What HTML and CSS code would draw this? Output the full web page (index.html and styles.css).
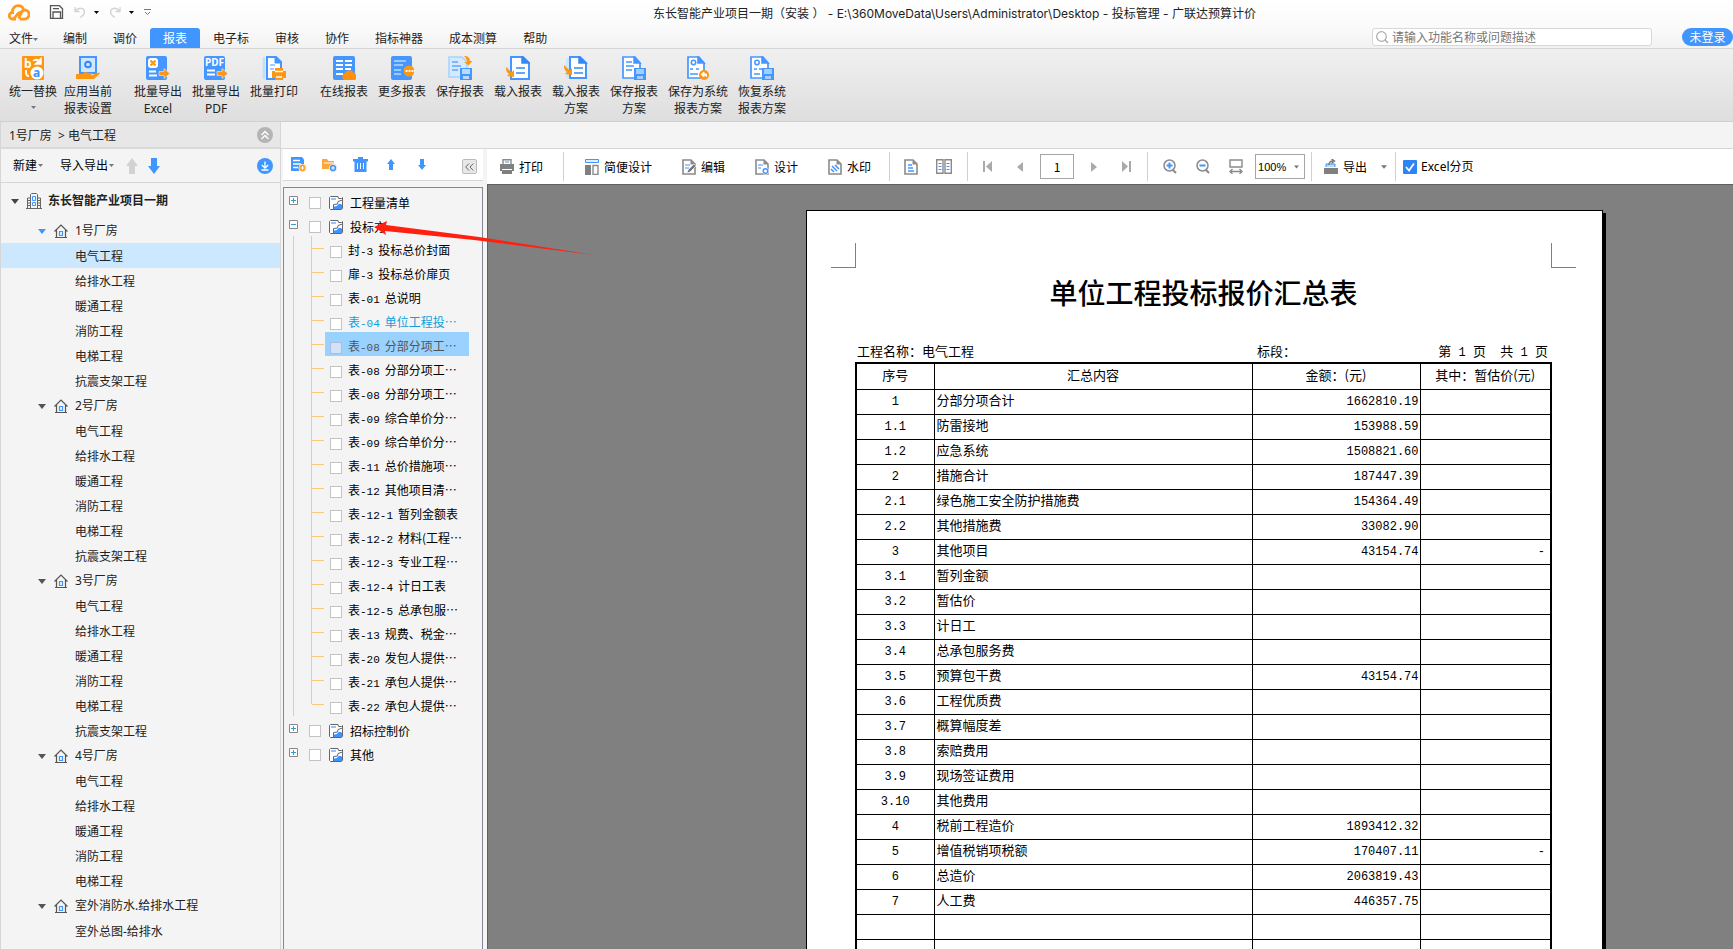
FILE: index.html
```html
<!DOCTYPE html>
<html lang="zh-CN">
<head>
<meta charset="utf-8">
<title>投标管理 - 广联达预算计价</title>
<link rel="stylesheet" href="styles.css">
</head>
<body>
<svg class="defs" aria-hidden="true">
  <symbol id="caret" viewBox="0 0 5 3"><path d="M0 0h5L2.500 3z" fill="currentColor"/></symbol>
  <symbol id="tri" viewBox="0 0 8 5"><path d="M0 0h8L4 5z" fill="currentColor"/></symbol>
  <symbol id="house" viewBox="0 0 14 14"><path d="M.5 7.500 7 1l6.500 6.500M2.500 6v7.500M11.500 6v7.500M1 13.500h12" fill="none" stroke="#555" stroke-width="1.200"/><path d="M5.500 7.500h3v4h-3z" fill="none" stroke="#4095ff" stroke-width="1.200"/></symbol>
  <symbol id="city" viewBox="0 0 16 16"><path d="M4.500 15V1.500l1-1h5l1 1V15M4.500 5h-3v10M11.500 5h3v10M0 15.500h16M2 7.500h2M2 10h2M2 12.500h2M12 7.500h2M12 10h2M12 12.500h2" fill="none" stroke="#666"/><path d="M6.500 3.500h3v4h-3zM6.500 9.500h3v3h-3z" fill="none" stroke="#4095ff"/></symbol>
  <symbol id="up" viewBox="0 0 12 16"><path d="M6 0l6 8H9v8H3V8H0z" fill="currentColor"/></symbol>
  <symbol id="down" viewBox="0 0 12 16"><path d="M6 16l6-8H9V0H3v8H0z" fill="currentColor"/></symbol>
  <symbol id="plus" viewBox="0 0 9 9"><path d="M.5.5h8v8h-8z" fill="#fff" stroke="#888"/><path d="M2 4.500h5M4.500 2v5" stroke="#2ba3dc"/></symbol>
  <symbol id="minus" viewBox="0 0 9 9"><path d="M.5.5h8v8h-8z" fill="#fff" stroke="#888"/><path d="M2 4.500h5" stroke="#2ba3dc"/></symbol>
  <symbol id="book" viewBox="0 0 14 14"><path d="M.5.5h9l4 1v12H.5z" fill="#fff"/><path d="M9 .5H1.500l-1 1v11l1 1h11l1-1V4L9 5.500 8.500 8 4.500 8.500V13M9 .5l.5 2h3l1-1V5" fill="none" stroke="#666"/><path d="M2 2h5v2H2z" fill="#8fc6ff"/><path d="M5 13v-2.500l3-.5 1.500-2H12l1 1v4z" fill="#3c93ff"/></symbol>
  <symbol id="sheet" viewBox="0 0 14 16"><path d="M1 1h8l4 4v10H1z" fill="#fff" stroke="#8a8a8a" stroke-width="1.600"/><path d="M8.500 1v4.500H13z" fill="#8a8a8a"/></symbol>
</svg>

<div class="app">
  <header class="titlebar">
    <div class="quick">
      <svg class="logo" width="22" height="17" viewBox="0 0 22 17"><path d="M8 15H4.500A3 3 0 0 1 4.500 8.500C4 4 7 1.700 10.500 1.700c3.500 0 4.500 1.800 5.500 4.300M5.500 14.500c3-1 3.500-6 7-6M12 15.200h4.500A4.600 4.600 0 0 0 16.500 6c-4 0-3.500 6-6 8.500" fill="none" stroke="#ff9a1f" stroke-width="2.800"/></svg>
      <button class="ib q-save" aria-label="保存"><svg width="15" height="14" viewBox="0 0 15 14"><path d="M1.500.7h9l3 3v9.600h-12zM4 13V7h7.500v6M4 3.700h6" fill="none" stroke="#555" stroke-width="1.300"/></svg></button>
      <button class="ib q-undo" aria-label="撤销"><svg width="12" height="12" viewBox="0 0 12 12"><path d="M1 1v4.500h4.500M1.500 5C5 .5 10.500 2 10.500 6c0 3-2.500 4-4.500 5.500" fill="none" stroke="#d2d2d2" stroke-width="1.300"/></svg></button>
      <svg class="q-caret" width="5" height="3"><use href="#caret"/></svg>
      <button class="ib q-redo" aria-label="恢复"><svg width="12" height="12" viewBox="0 0 12 12"><path d="M11 1v4.500H6.500M10.500 5C7 .5 1.500 2 1.500 6c0 3 2.500 4 4.500 5.500" fill="none" stroke="#d2d2d2" stroke-width="1.300"/></svg></button>
      <svg class="q-caret" width="5" height="3"><use href="#caret"/></svg>
      <button class="ib q-more" aria-label="自定义"><svg width="7" height="7" viewBox="0 0 7 7"><path d="M0 .5h7M1 3l2.500 2.500L6 3" fill="none" stroke="#777"/></svg></button>
    </div>
    <h1 class="window-title">东长智能产业项目一期（安装 ） - E:\360MoveData\Users\Administrator\Desktop - 投标管理 - 广联达预算计价</h1>
  </header>

  <nav class="menubar">
    <button class="menu file">文件<svg class="car" width="5" height="3"><use href="#caret"/></svg></button>
    <button class="menu">编制</button><button class="menu">调价</button><button class="menu active">报表</button><button class="menu">电子标</button><button class="menu">审核</button><button class="menu">协作</button><button class="menu">指标神器</button><button class="menu">成本测算</button><button class="menu">帮助</button>
    <label class="search"><svg width="13" height="13" viewBox="0 0 13 13"><circle cx="5.500" cy="5.500" r="4.800" fill="none" stroke="#aaa" stroke-width="1.200"/><path d="M9 9l3 3" stroke="#aaa" stroke-width="1.500"/></svg><input type="text" aria-label="搜索" placeholder="请输入功能名称或问题描述"></label>
    <button class="login">未登录</button>
  </nav>

  <div class="ribbon">
    <div class="rgroup tight">
      <button class="tool"><svg width="24" height="24" viewBox="0 0 24 24"><rect x="1" width="22" height="24" rx="1" fill="#ff960f"/><text x="3" y="12" class="glyph white">b</text><path d="M12 5c2-2 5-2 6 0M20 2.500v5.500h-5.500z" fill="#fff" stroke="#fff" stroke-width="1.500"/><circle cx="16" cy="17" r="6.500" fill="#fff"/><text x="12" y="21" class="glyph azure">a</text><path d="M5 14v3c0 2 1 3 3 3" fill="none" stroke="#fff" stroke-width="1.800"/></svg><span>统一替换</span><svg class="car" width="5" height="3"><use href="#caret"/></svg></button>
      <button class="tool"><svg width="24" height="24" viewBox="0 0 24 24"><path d="M4 1h16v16H4z" fill="#cfe6ff" stroke="#4596ff" stroke-width="2"/><circle cx="12" cy="8.500" r="2.800" fill="none" stroke="#3588f5" stroke-width="2"/><path d="M0 18h6l3-2 7 1.500-1 2 8-3 1 1-6 5.500H0z" fill="#ff960f"/></svg><span>应用当前<br>报表设置</span></button>
    </div>
    <div class="rgroup">
      <button class="tool"><svg width="24" height="24" viewBox="0 0 24 24"><rect width="21" height="24" rx="2" fill="#4596ff"/><rect x="2" y="2" width="10" height="10" rx="3" fill="#fff"/><path d="M4.500 4.500l5 5m0-5l-5 5" stroke="#ff960f" stroke-width="2.200"/><path d="M3 15.500h7M3 19.500h8" stroke="#fff" stroke-width="2"/><path d="M13 15.500h5v-3l6 5-6 5v-3h-5z" fill="#ff960f" stroke="#e8eef5" stroke-width=".6"/></svg><span>批量导出<br>Excel</span></button>
      <button class="tool"><svg width="24" height="24" viewBox="0 0 24 24"><rect width="21" height="24" rx="2" fill="#4596ff"/><text x="1" y="10" class="pdf">PDF</text><path d="M3 14.500h8M3 18.500h8" stroke="#fff" stroke-width="2"/><path d="M13 15.500h5v-3l6 5-6 5v-3h-5z" fill="#ff960f" stroke="#e8eef5" stroke-width=".6"/></svg><span>批量导出<br>PDF</span></button>
      <button class="tool"><svg width="24" height="24" viewBox="0 0 24 24"><path d="M2 1v22" stroke="#bfdfff" stroke-width="2.500"/><path d="M5 1h9l5 5v17H5z" fill="#fff" stroke="#4596ff" stroke-width="2"/><path d="M13 1l7 6h-7zM8 9h5M8 13h4" fill="#4596ff" stroke="#4596ff"/><path d="M13 12h8v3h3v7h-3v2h-8v-2h-3v-7h3z" fill="#ff960f"/><path d="M13 15.500h8M14 21h6" stroke="#fff" stroke-width="1.300"/></svg><span>批量打印</span></button>
    </div>
    <div class="rgroup">
      <button class="tool"><svg width="24" height="24" viewBox="0 0 24 24"><rect x="1" width="22" height="24" rx="2" fill="#4596ff"/><path d="M4 5h7M13 5h7M4 9h7M13 9h7M4 13h7M13 13h6M4 18h7" stroke="#fff" stroke-width="1.800"/><path d="M12 24a4 4 0 0 1 1-7 5 5 0 0 1 9 0 4 4 0 0 1 1 7z" fill="#ff8f0f"/></svg><span>在线报表</span></button>
      <button class="tool"><svg width="24" height="24" viewBox="0 0 24 24"><rect x="1" width="21" height="24" rx="2" fill="#4596ff"/><path d="M4 5h12M4 9h9M4 14h7M4 18h7" stroke="#b9dbff" stroke-width="1.500"/><circle cx="19" cy="15" r="5.500" fill="#ff960f"/><path d="M15.500 15h2m1 0h2m1 0h2" stroke="#fff" stroke-width="2"/></svg><span>更多报表</span></button>
      <button class="tool"><svg width="24" height="24" viewBox="0 0 24 24"><path d="M1 1h13l5 5v15H1z" fill="#d5eaff" stroke="#a8d2ff" stroke-width="1.500"/><path d="M4 6h6M4 10h9M4 14h6" stroke="#5ea8ff" stroke-width="1.500"/><path d="M16 0c4 0 6 2 6 5h2.500l-4 4.500L16 6h3c0-2-1-4-3-6z" fill="#ff960f"/><path d="M12 12h12v12H12z" fill="#4596ff"/><path d="M14 13h8v5h-8zM15 20h6v3h-6z" fill="#b9dbff"/></svg><span>保存报表</span></button>
      <button class="tool"><svg width="24" height="24" viewBox="0 0 24 24"><path d="M5 1h12l6 6v16H5z" fill="#fff" stroke="#4596ff" stroke-width="2"/><path d="M16 1l7 6h-7zM10 12h9M10 17h9" fill="#3588f5" stroke="#3588f5" stroke-width="1.500"/><path d="M0 11c0 4 1 6 3 7l-2 2 7 1v-7l-2 2c-3-1-3-3-6-5z" fill="#ff960f"/></svg><span>载入报表</span></button>
      <button class="tool"><svg width="24" height="24" viewBox="0 0 24 24"><path d="M2 2h8v20H2z" fill="#cfe6ff"/><path d="M6 1h10l6 6v15H6z" fill="#fff" stroke="#4596ff" stroke-width="2"/><path d="M15 1l7 6h-7zM10 12h9M10 17h9" fill="#3588f5" stroke="#3588f5" stroke-width="1.500"/><path d="M0 9c0 4 1 6 3 7l-2 2 7 1v-7l-2 2c-3-1-3-3-6-5z" fill="#ff960f"/></svg><span>载入报表<br>方案</span></button>
      <button class="tool"><svg width="24" height="24" viewBox="0 0 24 24"><path d="M1 1h12l5 6v15H1z" fill="#fff" stroke="#4596ff" stroke-width="1.700"/><path d="M12 1l6 6h-6zM4 6h6M4 10h8M4 14h6" fill="#4596ff" stroke="#4596ff" stroke-width="1.500"/><path d="M12 12h12v12H12z" fill="#4596ff"/><path d="M14 13h8v5h-8zM15 20h6v3h-6z" fill="#9fceff"/></svg><span>保存报表<br>方案</span></button>
      <button class="tool wide"><svg width="24" height="24" viewBox="0 0 24 24"><path d="M2 1h11l5 6v15H2z" fill="#fff" stroke="#4596ff" stroke-width="1.700"/><path d="M12 1l6 6h-6zM4 13h3m3 0h3M4 18h8" fill="#4596ff" stroke="#4596ff" stroke-width="1.600"/><circle cx="7.500" cy="6.500" r="2.200" fill="none" stroke="#4596ff" stroke-width="1.500"/><circle cx="18" cy="19" r="5" fill="#ff960f"/><path d="M15 18.500l3-2.500v5zM17 18h3.500v3" fill="#fff" stroke="#fff"/></svg><span>保存为系统<br>报表方案</span></button>
      <button class="tool"><svg width="24" height="24" viewBox="0 0 24 24"><path d="M1 1h12l5 6v15H1z" fill="#fff" stroke="#4596ff" stroke-width="1.700"/><path d="M12 1l6 6h-6zM4 13h3m2 0h3M4 18h6" fill="#4596ff" stroke="#4596ff" stroke-width="1.600"/><circle cx="7" cy="6.500" r="2.200" fill="none" stroke="#4596ff" stroke-width="1.500"/><path d="M12 12h12v12H12z" fill="#4596ff"/><path d="M14 13h8v5h-8zM15 20h6v3h-6z" fill="#9fceff"/></svg><span>恢复系统<br>报表方案</span></button>
    </div>
  </div>

  <main class="work">
    <aside class="projects">
      <div class="crumb"><span>1号厂房&nbsp; &gt; 电气工程</span><button class="ib" aria-label="收起"><svg width="16" height="16" viewBox="0 0 16 16"><circle cx="8" cy="8" r="8" fill="#b4b4b4"/><path d="M4.500 8 8 4.500 11.500 8M4.500 12 8 8.500 11.500 12" fill="none" stroke="#fff" stroke-width="1.400"/></svg></button></div>
      <div class="ptools">
        <button class="ib txt">新建<svg class="car" width="5" height="3"><use href="#caret"/></svg></button>
        <button class="ib txt imp">导入导出<svg class="car" width="5" height="3"><use href="#caret"/></svg></button>
        <button class="ib grey" aria-label="上移"><svg width="12" height="16"><use href="#up"/></svg></button>
        <button class="ib blue" aria-label="下移"><svg width="12" height="16"><use href="#down"/></svg></button>
        <button class="ib end" aria-label="下载"><svg width="16" height="16" viewBox="0 0 16 16"><circle cx="8" cy="8" r="8" fill="#4095ff"/><path d="M8 3.500V10M4.800 7 8 10.200 11.200 7M4.500 12h7" fill="none" stroke="#fff" stroke-width="1.300"/></svg></button>
      </div>
      <div class="ptree">
        <div class="root"><svg width="8" height="5"><use href="#tri"/></svg><svg width="16" height="16"><use href="#city"/></svg><b>东长智能产业项目一期</b></div>
        <div class="grp open"><svg width="8" height="5"><use href="#tri"/></svg><svg width="14" height="14"><use href="#house"/></svg>1号厂房</div>
        <ul><li class="on">电气工程</li><li>给排水工程</li><li>暖通工程</li><li>消防工程</li><li>电梯工程</li><li>抗震支架工程</li></ul>
        <div class="grp"><svg width="8" height="5"><use href="#tri"/></svg><svg width="14" height="14"><use href="#house"/></svg>2号厂房</div>
        <ul><li>电气工程</li><li>给排水工程</li><li>暖通工程</li><li>消防工程</li><li>电梯工程</li><li>抗震支架工程</li></ul>
        <div class="grp"><svg width="8" height="5"><use href="#tri"/></svg><svg width="14" height="14"><use href="#house"/></svg>3号厂房</div>
        <ul><li>电气工程</li><li>给排水工程</li><li>暖通工程</li><li>消防工程</li><li>电梯工程</li><li>抗震支架工程</li></ul>
        <div class="grp"><svg width="8" height="5"><use href="#tri"/></svg><svg width="14" height="14"><use href="#house"/></svg>4号厂房</div>
        <ul><li>电气工程</li><li>给排水工程</li><li>暖通工程</li><li>消防工程</li><li>电梯工程</li></ul>
        <div class="grp"><svg width="8" height="5"><use href="#tri"/></svg><svg width="14" height="14"><use href="#house"/></svg>室外消防水.给排水工程</div>
        <ul><li>室外总图-给排水</li></ul>
      </div>
    </aside>

    <div class="right">
      <div class="band"></div>
      <div class="panes">
        <section class="reports">
          <div class="rtools">
            <button class="ib" aria-label="新建报表"><svg width="15" height="15" viewBox="0 0 15 15"><path d="M0 0h11l2 2.500V8L8 14H0z" fill="#4095ff"/><path d="M2 3.500h7M2 7h8M2 10.500h5" stroke="#fff" stroke-width="1.300"/><circle cx="11.500" cy="11" r="3.700" fill="#ff960f" stroke="#fff" stroke-width=".7"/><path d="M9.500 11h4M11.500 9v4" stroke="#fff"/></svg></button>
            <button class="ib" aria-label="新建文件夹"><svg width="15" height="15" viewBox="0 0 15 15"><path d="M0 2h5l1.500 2H12v8H0z" fill="#ffa63a"/><path d="M2 6h10" stroke="#fff"/><circle cx="11" cy="11" r="3.700" fill="#3c8fe8" stroke="#fff" stroke-width=".7"/><path d="M9 11h4M11 9v4" stroke="#fff"/></svg></button>
            <button class="ib" aria-label="删除"><svg width="15" height="15" viewBox="0 0 15 15"><path d="M0 2h5V0h5v2h5v2.500h-1.500V15h-12V4.500H0z" fill="#4095ff"/><path d="M4.500 6v6M7.500 6v6M10.500 6v6" stroke="#fff"/></svg></button>
            <button class="ib blue" aria-label="上移"><svg width="8" height="11" viewBox="0 0 8 11"><path d="M4 0l4 5H6v6H2V5H0z" fill="currentColor"/></svg></button>
            <button class="ib blue" aria-label="下移"><svg width="8" height="11" viewBox="0 0 8 11"><path d="M4 11l4-5H6V0H2v6H0z" fill="currentColor"/></svg></button>
            <button class="fold" aria-label="折叠"><svg width="9" height="8" viewBox="0 0 9 8"><path d="M4 .5.700 4 4 7.500M8.300.5 5 4l3.300 3.500" fill="none" stroke="#666"/></svg></button>
          </div>
          <div class="rtree">
            <label class="rrow"><svg class="ex" width="9" height="9"><use href="#plus"/></svg><input type="checkbox"><svg width="14" height="14"><use href="#book"/></svg>工程量清单</label>
            <label class="rrow"><svg class="ex" width="9" height="9"><use href="#minus"/></svg><input type="checkbox"><svg width="14" height="14"><use href="#book"/></svg>投标方</label>
            <div class="kids">
              <label class="kid"><input type="checkbox"><span>封<i>-3</i>投标总价封面</span></label>
              <label class="kid"><input type="checkbox"><span>扉<i>-3</i>投标总价扉页</span></label>
              <label class="kid"><input type="checkbox"><span>表<i>-01</i>总说明</span></label>
              <label class="kid cur"><input type="checkbox"><span>表<i>-04</i>单位工程投⋯</span></label>
              <label class="kid sel"><input type="checkbox"><span>表<i>-08</i>分部分项工⋯</span></label>
              <label class="kid"><input type="checkbox"><span>表<i>-08</i>分部分项工⋯</span></label>
              <label class="kid"><input type="checkbox"><span>表<i>-08</i>分部分项工⋯</span></label>
              <label class="kid"><input type="checkbox"><span>表<i>-09</i>综合单价分⋯</span></label>
              <label class="kid"><input type="checkbox"><span>表<i>-09</i>综合单价分⋯</span></label>
              <label class="kid"><input type="checkbox"><span>表<i>-11</i>总价措施项⋯</span></label>
              <label class="kid"><input type="checkbox"><span>表<i>-12</i>其他项目清⋯</span></label>
              <label class="kid"><input type="checkbox"><span>表<i>-12-1</i>暂列金额表</span></label>
              <label class="kid"><input type="checkbox"><span>表<i>-12-2</i>材料(工程⋯</span></label>
              <label class="kid"><input type="checkbox"><span>表<i>-12-3</i>专业工程⋯</span></label>
              <label class="kid"><input type="checkbox"><span>表<i>-12-4</i>计日工表</span></label>
              <label class="kid"><input type="checkbox"><span>表<i>-12-5</i>总承包服⋯</span></label>
              <label class="kid"><input type="checkbox"><span>表<i>-13</i>规费、税金⋯</span></label>
              <label class="kid"><input type="checkbox"><span>表<i>-20</i>发包人提供⋯</span></label>
              <label class="kid"><input type="checkbox"><span>表<i>-21</i>承包人提供⋯</span></label>
              <label class="kid"><input type="checkbox"><span>表<i>-22</i>承包人提供⋯</span></label>
            </div>
            <label class="rrow"><svg class="ex" width="9" height="9"><use href="#plus"/></svg><input type="checkbox"><svg width="14" height="14"><use href="#book"/></svg>招标控制价</label>
            <label class="rrow"><svg class="ex" width="9" height="9"><use href="#plus"/></svg><input type="checkbox"><svg width="14" height="14"><use href="#book"/></svg>其他</label>
          </div>
        </section>

        <section class="preview">
          <div class="vtools">
            <div class="vg print"><button class="ib txt"><svg width="14" height="15" viewBox="0 0 14 15"><path d="M3 5V.7h8V5" fill="#fff" stroke="#8a8a8a" stroke-width="1.400"/><path d="M5 3h4" stroke="#4095ff"/><path d="M0 5h14v7h-2v3H2v-3H0z" fill="#808080"/><path d="M2 10.500h10" stroke="#fff"/></svg>打印</button></div>
            <div class="vg edit">
              <button class="ib txt"><svg width="14" height="16" viewBox="0 0 14 16"><path d="M.5.5h13v3H.5z" fill="#dcedff" stroke="#4095ff"/><path d="M0 6h6v10H0z" fill="#808080"/><path d="M8 6.500h5v9H8z" fill="#fff" stroke="#8a8a8a" stroke-width="1.400"/></svg>简便设计</button>
              <button class="ib txt"><svg width="14" height="16" viewBox="0 0 14 16"><use href="#sheet"/><path d="M3 6h5M3 9h4" stroke="#4095ff"/><path d="M5 14l1-3 6-6 2 2-6 6z" fill="#777" stroke="#fff" stroke-width=".6"/></svg>编辑</button>
              <button class="ib txt"><svg width="14" height="16" viewBox="0 0 14 16"><use href="#sheet"/><path d="M3 6h5M3 9h3" stroke="#4095ff"/><circle cx="10.500" cy="12" r="3.500" fill="#fff"/><circle cx="10.500" cy="12" r="2.300" fill="#fff" stroke="#4095ff" stroke-width="1.500"/></svg>设计</button>
              <button class="ib txt"><svg width="14" height="16" viewBox="0 0 14 16"><use href="#sheet"/><path d="M4 7l5 5M7 6l4 4M3 10l3 3" stroke="#4095ff" stroke-width="1.600"/></svg>水印</button>
            </div>
            <div class="vg view">
              <button class="ib" aria-label="单页"><svg width="14" height="16" viewBox="0 0 14 16"><use href="#sheet"/><path d="M4 6h4M4 9h5M4 12h6" stroke="#4095ff" stroke-width="1.400"/></svg></button>
              <button class="ib" aria-label="双页"><svg width="16" height="15" viewBox="0 0 16 15"><path d="M.7.7H7v13.600H.7zM9 .7h6.300v13.600H9z" fill="#fff" stroke="#8a8a8a" stroke-width="1.400"/><path d="M2.500 4.500h3M2.500 7.500h3M2.500 10.500h3M10.500 4.500h3M10.500 7.500h3M10.500 10.500h3" stroke="#4095ff"/></svg></button>
            </div>
            <div class="vg pager">
              <button class="ib" aria-label="首页"><svg width="10" height="11" viewBox="0 0 10 11"><path d="M1 0v11" stroke="#aaa" stroke-width="2"/><path d="M9 0v11L3 5.500z" fill="#aaa"/></svg></button>
              <button class="ib" aria-label="上一页"><svg width="7" height="10" viewBox="0 0 7 10"><path d="M6 0v10L0 5z" fill="#aaa"/></svg></button>
              <input class="pageno" type="text" aria-label="页码" value="1">
              <button class="ib" aria-label="下一页"><svg width="7" height="10" viewBox="0 0 7 10"><path d="M1 0v10l6-5z" fill="#aaa"/></svg></button>
              <button class="ib" aria-label="末页"><svg width="10" height="11" viewBox="0 0 10 11"><path d="M9 0v11" stroke="#aaa" stroke-width="2"/><path d="M1 0v11l6-5.500z" fill="#aaa"/></svg></button>
            </div>
            <div class="vg zoom">
              <button class="ib" aria-label="放大"><svg width="14" height="15" viewBox="0 0 14 15"><circle cx="6.500" cy="6.500" r="5.500" fill="none" stroke="#8a8a8a" stroke-width="1.500"/><path d="M10 11l3 3" stroke="#8a8a8a" stroke-width="2"/><path d="M3.500 6.500h6M6.500 3.500v6" stroke="#4095ff" stroke-width="2"/></svg></button>
              <button class="ib" aria-label="缩小"><svg width="14" height="15" viewBox="0 0 14 15"><circle cx="6.500" cy="6.500" r="5.500" fill="none" stroke="#8a8a8a" stroke-width="1.500"/><path d="M10 11l3 3" stroke="#8a8a8a" stroke-width="2"/><path d="M3.500 6.500h6" stroke="#4095ff" stroke-width="2"/></svg></button>
              <button class="ib" aria-label="适合宽度"><svg width="14" height="15" viewBox="0 0 14 15"><path d="M1 1h12v7H1zM1 12.500h12M3.500 10 1 12.500 3.500 15M10.500 10l2.500 2.500-2.500 2.500" fill="none" stroke="#8a8a8a" stroke-width="1.400"/></svg></button>
              <span class="sel-wrap"><select aria-label="缩放比例"><option>100%</option></select><svg width="5" height="4"><use href="#caret"/></svg></span>
            </div>
            <div class="vg export"><button class="ib txt"><svg width="14" height="15" viewBox="0 0 14 15"><path d="M0 9h14v6H0z" fill="#808080"/><path d="M2 8V5h9v3" fill="#b9dbff" stroke="#4095ff"/><path d="M5 6c0-3 2-4 4-4M7.500 0l3 2-3 2.500" fill="none" stroke="#777" stroke-width="1.400"/></svg>导出<svg class="car" width="6" height="4"><use href="#caret"/></svg></button></div>
            <label class="xl"><input type="checkbox" checked><svg width="14" height="14" viewBox="0 0 14 14"><rect width="14" height="14" rx="1" fill="#2d84f5"/><path d="M3 7l3 3.500 5-7" fill="none" stroke="#fff" stroke-width="1.700"/></svg>Excel分页</label>
          </div>
          <div class="canvas">
            <article class="paper">
              <div class="marks"><i class="tl"></i><i class="tr"></i></div>
              <div class="body">
                <h2>单位工程投标报价汇总表</h2>
                <div class="info"><span>工程名称：电气工程</span><span>标段：</span><span>第<i> 1 </i>页<i>  </i>共<i> 1 </i>页</span></div>
                <table>
                  <colgroup><col class="c1"><col class="c2"><col class="c3"><col class="c4"></colgroup>
                  <thead><tr><th>序号</th><th>汇总内容</th><th>金额：(元)</th><th>其中：暂估价(元)</th></tr></thead>
                  <tbody>
                    <tr><td>1</td><td>分部分项合计</td><td>1662810.19</td><td></td></tr>
                    <tr><td>1.1</td><td>防雷接地</td><td>153988.59</td><td></td></tr>
                    <tr><td>1.2</td><td>应急系统</td><td>1508821.60</td><td></td></tr>
                    <tr><td>2</td><td>措施合计</td><td>187447.39</td><td></td></tr>
                    <tr><td>2.1</td><td>绿色施工安全防护措施费</td><td>154364.49</td><td></td></tr>
                    <tr><td>2.2</td><td>其他措施费</td><td>33082.90</td><td></td></tr>
                    <tr><td>3</td><td>其他项目</td><td>43154.74</td><td>-</td></tr>
                    <tr><td>3.1</td><td>暂列金额</td><td></td><td></td></tr>
                    <tr><td>3.2</td><td>暂估价</td><td></td><td></td></tr>
                    <tr><td>3.3</td><td>计日工</td><td></td><td></td></tr>
                    <tr><td>3.4</td><td>总承包服务费</td><td></td><td></td></tr>
                    <tr><td>3.5</td><td>预算包干费</td><td>43154.74</td><td></td></tr>
                    <tr><td>3.6</td><td>工程优质费</td><td></td><td></td></tr>
                    <tr><td>3.7</td><td>概算幅度差</td><td></td><td></td></tr>
                    <tr><td>3.8</td><td>索赔费用</td><td></td><td></td></tr>
                    <tr><td>3.9</td><td>现场签证费用</td><td></td><td></td></tr>
                    <tr><td>3.10</td><td>其他费用</td><td></td><td></td></tr>
                    <tr><td>4</td><td>税前工程造价</td><td>1893412.32</td><td></td></tr>
                    <tr><td>5</td><td>增值税销项税额</td><td>170407.11</td><td>-</td></tr>
                    <tr><td>6</td><td>总造价</td><td>2063819.43</td><td></td></tr>
                    <tr><td>7</td><td>人工费</td><td>446357.75</td><td></td></tr>
                    <tr><td></td><td></td><td></td><td></td></tr>
                    <tr><td></td><td></td><td></td><td></td></tr>
                    <tr><td></td><td></td><td></td><td></td></tr>
                  </tbody>
                </table>
              </div>
            </article>
          </div>
        </section>
      </div>
    </div>
  </main>
  <svg class="pointer" width="220" height="36" viewBox="0 0 220 36" aria-hidden="true"><path d="M0 7 13 1 12 5 105 17 220 35 100 20 11 11 12 15z" fill="#ff2010"/></svg>
</div>
</body>
</html>
```
FILE: styles.css
```css
* { box-sizing: border-box; }
body {
  margin: 0;
  font: 12px/16px "Noto Sans", "Noto Sans CJK SC", sans-serif;
  color: #222;
}
button, input, select { font: inherit; color: inherit; }
button { border: 0; background: none; padding: 0; }
svg { display: block; flex: none; }
ul { list-style: none; margin: 0; padding: 0; }
.defs { position: absolute; width: 0; height: 0; }
.ib { display: flex; align-items: center; }
.car { color: #777; }
.app {
  position: relative;
  height: 100vh;
  display: flex;
  flex-direction: column;
  overflow: hidden;
  background: #f4f4f4;
}

/* title bar and menu */
.titlebar {
  height: 28px;
  flex: none;
  display: flex;
  background: linear-gradient(#fff, #fafafa);
}
.quick { width: 653px; display: flex; align-items: center; padding: 0 0 4px 8px; }
.q-save { margin-left: 19px; }
.q-undo { margin-left: 10px; }
.q-redo { margin-left: 10px; }
.q-more { margin-left: 10px; }
.q-caret { margin-left: 8px; color: #000; }
.window-title { margin: 0; font-family: Inter, "Noto Sans CJK SC", sans-serif; font-size: 12px; font-weight: 400; line-height: 28px; white-space: nowrap; }
.menubar {
  height: 21px;
  flex: none;
  display: flex;
  border-bottom: 1px solid #d6d6d6;
  background: linear-gradient(#fafafa, #f2f2f2);
}
.menu { padding: 2px 13px 0; line-height: 18px; white-space: nowrap; }
.menu.file { width: 50px; padding: 2px 0 0 9px; display: flex; align-items: center; }
.menu.active { background: #4095ff; color: #fff; border-radius: 3px 3px 0 0; }
.search {
  width: 280px;
  height: 18px;
  margin-left: auto;
  display: flex;
  align-items: center;
  gap: 3px;
  padding-left: 3px;
  border: 1px solid #d8d8d8;
  border-radius: 3px;
  background: #fff;
}
.search input { flex: 1; min-width: 0; border: 0; padding: 1px 0 0; background: none; outline: 0; line-height: 15px; }
.search input::placeholder { color: #777; opacity: 1; }
.login { width: 51px; height: 18px; margin-left: 30px; padding-top: 1px; border-radius: 9px; background: #4095ff; color: #fff; line-height: 17px; }

/* ribbon */
.ribbon {
  height: 73px;
  flex: none;
  display: flex;
  gap: 22px;
  padding: 7px 0 0 9px;
  border-bottom: 1px solid #cfcfcf;
  background: linear-gradient(#f0f0f0, #dedede);
}
.rgroup { display: flex; gap: 10px; }
.rgroup.tight { gap: 7px; }
.tool { width: 48px; display: flex; flex-direction: column; align-items: center; gap: 3px; line-height: 17px; white-space: nowrap; }
.tool.wide { width: 60px; }
.tool .car { margin-top: 3px; }
.pdf { font: bold 10px "Noto Sans", sans-serif; fill: #fff; }
.glyph { font: bold 12px "Noto Sans", sans-serif; }
.glyph.white { fill: #fff; }
.glyph.azure { fill: #3c93ff; }

/* project tree */
.work { flex: 1; min-height: 0; display: flex; }
.projects { width: 281px; flex: none; border: solid #d6d6d6; border-width: 0 1px; }
.crumb {
  height: 27px;
  display: flex;
  align-items: center;
  justify-content: space-between;
  padding: 0 7px 0 8px;
  background: #e7e7e7;
  border-bottom: 2px solid #d9d9d9;
}
.crumb span { padding-top: 2px; }
.ptools {
  height: 34px;
  display: flex;
  align-items: center;
  padding: 0 7px 0 12px;
  border-bottom: 1px solid #d6d6d6;
  color: #000;
}
.ptools .imp { margin: 0 12px 0 17px; }
.ptools .car { margin-left: 1px; }
.grey { color: #d2d2d2; }
.blue { color: #4095ff; }
.ptools .blue { margin-left: 10px; }
.ptools .end { margin-left: auto; }
.root { height: 35px; display: flex; align-items: center; gap: 6px; padding: 1px 0 0 10px; }
.root svg:first-child { margin-right: 1px; color: #444; }
.grp { height: 25px; display: flex; align-items: center; gap: 7px; padding: 1px 0 0 37px; }
.grp svg:first-child { color: #555; margin-right: 1px; }
.grp.open svg:first-child { color: #4095ff; }
.ptree li { line-height: 23px; padding: 2px 0 0 74px; }
.ptree li.on { background: #cce8ff; }

/* right-hand side */
.right { flex: 1; min-width: 0; display: flex; flex-direction: column; }
.band { height: 27px; flex: none; border-bottom: 1px solid #d6d6d6; }
.panes { flex: 1; min-height: 0; display: flex; }
.reports { width: 206px; flex: none; padding: 0 4px 0 2px; display: flex; flex-direction: column; color: #000; }
.rtools {
  height: 32px;
  flex: none;
  display: flex;
  align-items: center;
  gap: 16px;
  padding: 0 6px 0 8px;
  background: #fff;
  border-bottom: 1px solid #d6d6d6;
}
.rtools .blue { margin: 0 4px 0 3px; }
.fold {
  width: 15px;
  height: 15px;
  margin: 4px 0 0 auto;
  display: grid;
  place-items: center;
  border: 1px solid #bbb;
  border-radius: 2px;
  background: #e8e8e8;
}
.rtree { flex: 1; margin-top: 6px; border: 1px solid #85859a; border-bottom: 0; font-family: "Noto Sans CJK SC", sans-serif; overflow: hidden; }
.rrow { height: 24px; padding: 5px 0 0 5px; display: flex; align-items: center; gap: 7px; }
.rrow .ex { margin: 0 4px 4px 0; }
.rtree input { appearance: none; flex: none; width: 12px; height: 12px; margin: 0; border: 1px solid #c3c3c3; background: #fff; }
.rrow input { margin-right: 1px; }
.kids { margin-left: 9px; padding-left: 17px; border-left: 1px solid #ffc87a; }
.kid {
  height: 24px;
  display: grid;
  grid-template-columns: 18px 12px 1fr;
  border-left: 1px solid #ffc87a;
  white-space: nowrap;
}
.kid::before { content: ""; height: 12px; width: 12px; border-bottom: 1px solid #ffc87a; }
.kid:last-child { border-image: linear-gradient(#ffc87a 50%, transparent 50%) 1; }
.kid span { padding-left: 6px; line-height: 27px; }
.kid input { align-self: center; margin-top: 4px; }
.kid i { font: 11px/16px "Liberation Mono", monospace; margin-right: 5px; }
.kid.cur { color: #0f9fdc; }
.kid.sel { color: #555; background: linear-gradient(#99d1ff, #99d1ff) 13px 0 / 144px 24px no-repeat; }
.kid.sel input { background: #d5e1f5; border-color: #a9bce0; }

/* preview toolbar */
.preview { flex: 1; min-width: 0; display: flex; flex-direction: column; }
.vtools { height: 35px; flex: none; display: flex; align-items: center; background: #fff; color: #000; font-family: "Noto Sans CJK SC", sans-serif; }
.vg { height: 29px; display: flex; align-items: center; border-right: 1px solid #d0d0d0; }
.vg .txt { gap: 5px; white-space: nowrap; }
.print { padding: 0 20px 0 13px; }
.edit { padding: 0 18px 0 21px; gap: 30px; }
.view { padding: 0 15px 0 14px; gap: 18px; }
.pager { padding: 0 16px 0 15px; gap: 24px; }
.pageno { width: 34px; height: 25px; margin: 0 -8px; padding: 0; border: 1px solid #a5a5a5; text-align: center; background: #fff; }
.zoom { padding: 0 6px 0 15px; gap: 19px; }
.sel-wrap { display: flex; align-items: center; width: 50px; height: 25px; margin-left: -7px; border: 1px solid #a5a5a5; }
.sel-wrap select { width: 38px; height: 23px; appearance: none; border: 0; padding: 0 0 0 2px; background: none; font-family: "Liberation Sans", sans-serif; font-size: 11px; }
.sel-wrap svg { color: #777; }
.export { padding: 0 8px 0 12px; }
.export .car { margin-left: 9px; }
.xl { display: flex; align-items: center; gap: 4px; padding-left: 7px; font-family: "Noto Sans", "Noto Sans CJK SC", sans-serif; white-space: nowrap; }
.xl input { appearance: none; margin: 0 -4px 0 0; width: 0; height: 0; }

/* printed sheet */
.canvas { flex: 1; min-height: 0; overflow: hidden; padding: 25px 0 0 318px; background: #808080; border: solid #5f5f5f; border-width: 1px 0 0 1px; }
.paper { width: 797px; min-height: 1123px; padding: 32px 26px 32px 24px; border: 1px solid #000; background: #fff; box-shadow: 3px 3px 0 #000; color: #000; font: 13px/17px "Noto Sans CJK SC", sans-serif; }
.marks { display: flex; justify-content: space-between; }
.marks i { width: 25px; height: 25px; border-bottom: 1px solid #808080; }
.tl { border-right: 1px solid #808080; }
.tr { border-left: 1px solid #808080; }
.body { margin: 0 24px; }
h2 { margin: 6px 0 32px; font-size: 28px; line-height: 36px; font-weight: 500; text-align: center; }
.info { display: grid; grid-template-columns: 400px 1fr auto; padding: 0 4px 1px 2px; white-space: pre; }
.info i { font: 12px/16px "Liberation Mono", monospace; }
table { width: 100%; border-collapse: collapse; table-layout: fixed; border: 2px solid #000; }
.c1 { width: 78px; }
.c3 { width: 168px; }
.c4 { width: 131px; }
th, td { height: 25px; padding: 0 2px; border: 1px solid #000; font-weight: 400; line-height: 17px; }
th { height: 26px; padding-bottom: 4px; }
td { padding-top: 1px; font-family: "Liberation Mono", monospace; font-size: 12px; text-align: right; }
td:nth-child(1) { text-align: center; }
td:nth-child(2) { padding: 0 2px 4px; font-family: "Noto Sans CJK SC", sans-serif; font-size: 13px; text-align: left; }
td:nth-child(3) { padding-right: 1px; }
td:nth-child(4) { padding-right: 5px; }

/* annotation drawn across the panes */
.pointer { position: absolute; left: 374px; top: 220px; }
```
